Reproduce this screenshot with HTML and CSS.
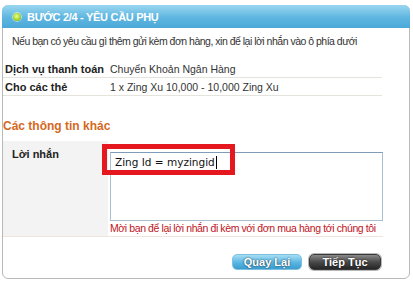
FILE: index.html
```html
<!DOCTYPE html>
<html lang="vi">
<head>
<meta charset="utf-8">
<title>Bước 2/4 - Yêu cầu phụ</title>
<link rel="stylesheet" href="styles.css">
</head>
<body>
<div class="panel">
  <div class="header">
    <span class="dot"></span>
    <span class="title">BƯỚC 2/4 - YÊU CẦU PHỤ</span>
  </div>
  <p class="intro">Nếu bạn có yêu cầu gì thêm gửi kèm đơn hàng, xin để lại lời nhắn vào ô phía dưới</p>
  <table class="info">
    <tr><th>Dịch vụ thanh toán</th><td>Chuyển Khoản Ngân Hàng</td></tr>
    <tr><th>Cho các thẻ</th><td>1 x Zing Xu 10,000 - 10,000 Zing Xu</td></tr>
  </table>
  <h3 class="section">Các thông tin khác</h3>
  <div class="msg">
    <div class="msg-label">Lời nhắn</div>
    <div class="msg-field">
      <div class="textarea"><span class="typed">Zing Id = myzingid</span><span class="caret"></span></div>
      <div class="hint">Mời bạn để lại lời nhắn đi kèm với đơn mua hàng tới chúng tôi</div>
    </div>
    <div class="highlight"></div>
  </div>
  <div class="actions">
    <span class="btn btn-back">Quay Lại</span>
    <span class="btn btn-next">Tiếp Tục</span>
  </div>
</div>
</body>
</html>
```

FILE: styles.css
```css
html, body {
  margin: 0;
  padding: 0;
  background: #ffffff;
}
body {
  font-family: "Liberation Sans", Arial, sans-serif;
  font-size: 10.5px;
  color: #333333;
}
.panel {
  position: relative;
  margin: 5px 3px 0 2px;
  width: 406px;
  height: 272px;
  border: 1px solid #b9b9b9;
  border-radius: 6px;
  box-sizing: content-box;
}
.header {
  height: 23px;
  margin: -1px -1px 0 -1px;
  border-radius: 6px 6px 0 0;
  background: linear-gradient(#9ad6f0, #5eb6e0 55%, #4aa8d8);
  display: flex;
  align-items: center;
  padding-left: 11px;
}
.dot {
  width: 8px;
  height: 8px;
  border-radius: 50%;
  background: radial-gradient(circle at 45% 40%, #e8ff9a 0, #b5e03a 45%, #6a9e16 100%);
  box-shadow: 0 0 0 1px rgba(255,255,255,0.5);
}
.title {
  margin-left: 6px;
  color: #ffffff;
  font-weight: bold;
  font-size: 11px;
  letter-spacing: -0.3px;
}
.intro {
  margin: 7px 0 0 9px;
  line-height: 13px;
  color: #333;
  letter-spacing: -0.5px;
}
.info {
  border-collapse: collapse;
  margin: 12px 0 0 0;
  width: 379px;
}
.info th, .info td {
  border-bottom: 1px solid #e4e4dc;
  height: 17px;
  padding: 0;
  text-align: left;
  vertical-align: middle;
}
.info th {
  width: 105px;
  padding-left: 2px;
  font-weight: bold;
  font-size: 11px;
  color: #222;
}
.info td {
  color: #333;
}
.section {
  margin: 23px 0 0 0;
  font-size: 12px;
  font-weight: bold;
  color: #d4691e;
  line-height: 14px;
}
.msg {
  position: relative;
  display: flex;
  margin-top: 8px;
  width: 380px;
  border-bottom: 1px solid #efe4e0;
}
.msg-label {
  width: 96px;
  padding: 7px 0 0 9px;
  background: #f3f3f3;
  font-weight: bold;
  font-size: 11px;
  color: #222;
}
.msg-field {
  padding: 11px 0 0 2px;
  flex: 1;
}
.textarea {
  height: 63px;
  border: 1px solid #a9bfcf;
  border-top-color: #7f9db9;
  padding: 2px 4px;
  color: #111;
  font-family: "DejaVu Sans", Verdana, sans-serif;
  font-size: 10.5px;
  line-height: 14px;
  display: flex;
  align-items: flex-start;
}
.caret {
  display: inline-block;
  width: 1px;
  height: 13px;
  background: #000;
  margin-left: 1px;
  margin-top: 1px;
}
.hint {
  color: #c0141c;
  padding: 1px 0 1px 0;
  line-height: 13px;
  letter-spacing: -0.4px;
  white-space: nowrap;
}
.highlight {
  position: absolute;
  left: 99px;
  top: 3px;
  width: 123px;
  height: 21px;
  border: 5px solid #e5171f;
}
.actions {
  display: flex;
  justify-content: flex-end;
  gap: 7px;
  margin: 17px 28px 0 0;
}
.btn {
  display: inline-flex;
  align-items: center;
  justify-content: center;
  width: 68px;
  height: 14px;
  border-radius: 5px;
  font-weight: bold;
  font-size: 11px;
  color: #ffffff;
  text-shadow: 0 0 2px rgba(0,0,0,0.8);
}
.btn-back {
  background: linear-gradient(#a6def5, #58b5e2 55%, #3b9dcf);
  border: 1px solid #7ec0e0;
}
.btn-next {
  width: 70px;
  background: linear-gradient(#8a8a8a, #4a4a4a 50%, #262626);
  border: 1px solid #3a3a3a;
  box-shadow: 0 0 0 1px #b8b8b8;
}
```
